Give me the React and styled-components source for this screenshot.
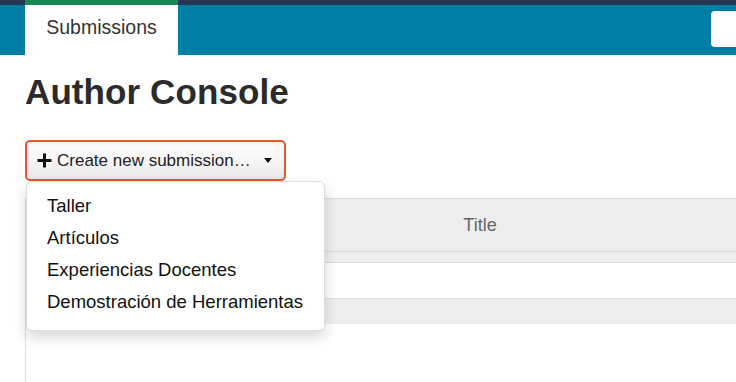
import React from "react";
import styled, { createGlobalStyle } from "styled-components";

const Global = createGlobalStyle`
  html, body { margin: 0; padding: 0; overflow: hidden; background: #fff; }
  body { font-family: "Liberation Sans", Arial, sans-serif; color: #333; }
`;

const NavBar = styled.header`
  display: flex;
  align-items: flex-start;
  height: 50px;
  background: #007fa6;
  border-top: 5px solid #283751;
`;

const Tab = styled.div`
  flex: none;
  margin-left: 25px;
  margin-top: -5px;
  width: 153px;
  height: 55px;
  border-top: 5px solid #178a56;
  background: #fff;
  display: flex;
  align-items: center;
  justify-content: center;
  font-size: 19.5px;
  color: #333;
  box-sizing: border-box;
  padding-bottom: 6px;
`;

const SearchBox = styled.div`
  margin-left: 533px;
  margin-top: 6px;
  flex: none;
  width: 200px;
  height: 36px;
  background: #fff;
  border-radius: 4px;
`;

const Main = styled.main`
  padding: 0 0 0 25px;
`;

const Heading = styled.h1`
  margin: 15px 0 0;
  font-size: 35px;
  line-height: 44px;
  font-weight: bold;
  color: #2b2b2b;
  letter-spacing: 0.1px;
`;

const Toolbar = styled.div`
  position: relative;
  margin-top: 26px;
  height: 41px;
`;

const DropButton = styled.button`
  display: flex;
  align-items: center;
  box-sizing: border-box;
  width: 261px;
  height: 41px;
  padding: 0 12px 0 10px;
  border: 2px solid #e4582b;
  border-radius: 5px;
  background: linear-gradient(#ffffff 0%, #f4f4f4 60%, #e8e8e8 100%);
  box-shadow: inset 0 2px 4px rgba(0, 0, 0, 0.06);
  font-family: "Liberation Sans", Arial, sans-serif;
  font-size: 17px;
  color: #222;
  cursor: pointer;
`;

const Label = styled.span`
  margin-left: 5px;
  white-space: nowrap;
`;

const Caret = styled.span`
  margin-left: auto;
  width: 0;
  height: 0;
  border-left: 4.5px solid transparent;
  border-right: 4.5px solid transparent;
  border-top: 5px solid #111;
`;

const Menu = styled.ul`
  position: absolute;
  z-index: 10;
  top: 41px;
  left: 1px;
  width: 299px;
  box-sizing: border-box;
  margin: 0;
  padding: 8px 0 12px;
  list-style: none;
  background: #fff;
  border: 1px solid rgba(0, 0, 0, 0.13);
  border-radius: 6px;
  box-shadow: 0 6px 14px rgba(0, 0, 0, 0.16);
`;

const MenuItem = styled.li`
  padding: 0 20px;
  height: 32px;
  line-height: 32px;
  font-size: 18.5px;
  color: #111;
  white-space: nowrap;
`;

const Table = styled.div`
  margin-top: 17px;
  border-left: 1px solid #ddd;
  min-height: 190px;
`;

const HeaderRow = styled.div`
  display: grid;
  grid-template-columns: 300px 308px 1fr;
  height: 52px;
  align-items: center;
  background: #eeeeee;
  border-top: 1px solid #dcdcdc;
  border-bottom: 1px solid #d6d6d6;
`;

const HeaderCell = styled.div`
  text-align: center;
  font-size: 18px;
  color: #666;
`;

const Strip = styled.div`
  height: ${(p) => p.$h}px;
  background: ${(p) => (p.$gray ? "#eeeeee" : "#fff")};
  border-bottom: ${(p) => (p.$line ? "1px solid #dedede" : "none")};
`;

function PlusIcon() {
  return (
    <svg width="15" height="15" viewBox="0 0 15 15" aria-hidden="true">
      <rect x="6" y="0.5" width="3" height="14" fill="#111" />
      <rect x="0.5" y="6" width="14" height="3" fill="#111" />
    </svg>
  );
}

export default function App() {
  const items = ["Taller", "Artículos", "Experiencias Docentes", "Demostración de Herramientas"];
  return (
    <>
      <Global />
      <NavBar>
        <Tab>Submissions</Tab>
        <SearchBox />
      </NavBar>
      <Main>
        <Heading>Author Console</Heading>
        <Toolbar>
          <DropButton>
            <PlusIcon />
            <Label>Create new submission…</Label>
            <Caret />
          </DropButton>
          <Menu>
            {items.map((t) => (
              <MenuItem key={t}>{t}</MenuItem>
            ))}
          </Menu>
        </Toolbar>
        <Table>
          <HeaderRow>
            <HeaderCell />
            <HeaderCell>Title</HeaderCell>
            <HeaderCell />
          </HeaderRow>
          <Strip $h={10} $gray $line />
          <Strip $h={35} $line />
          <Strip $h={25} $gray />
        </Table>
      </Main>
    </>
  );
}
